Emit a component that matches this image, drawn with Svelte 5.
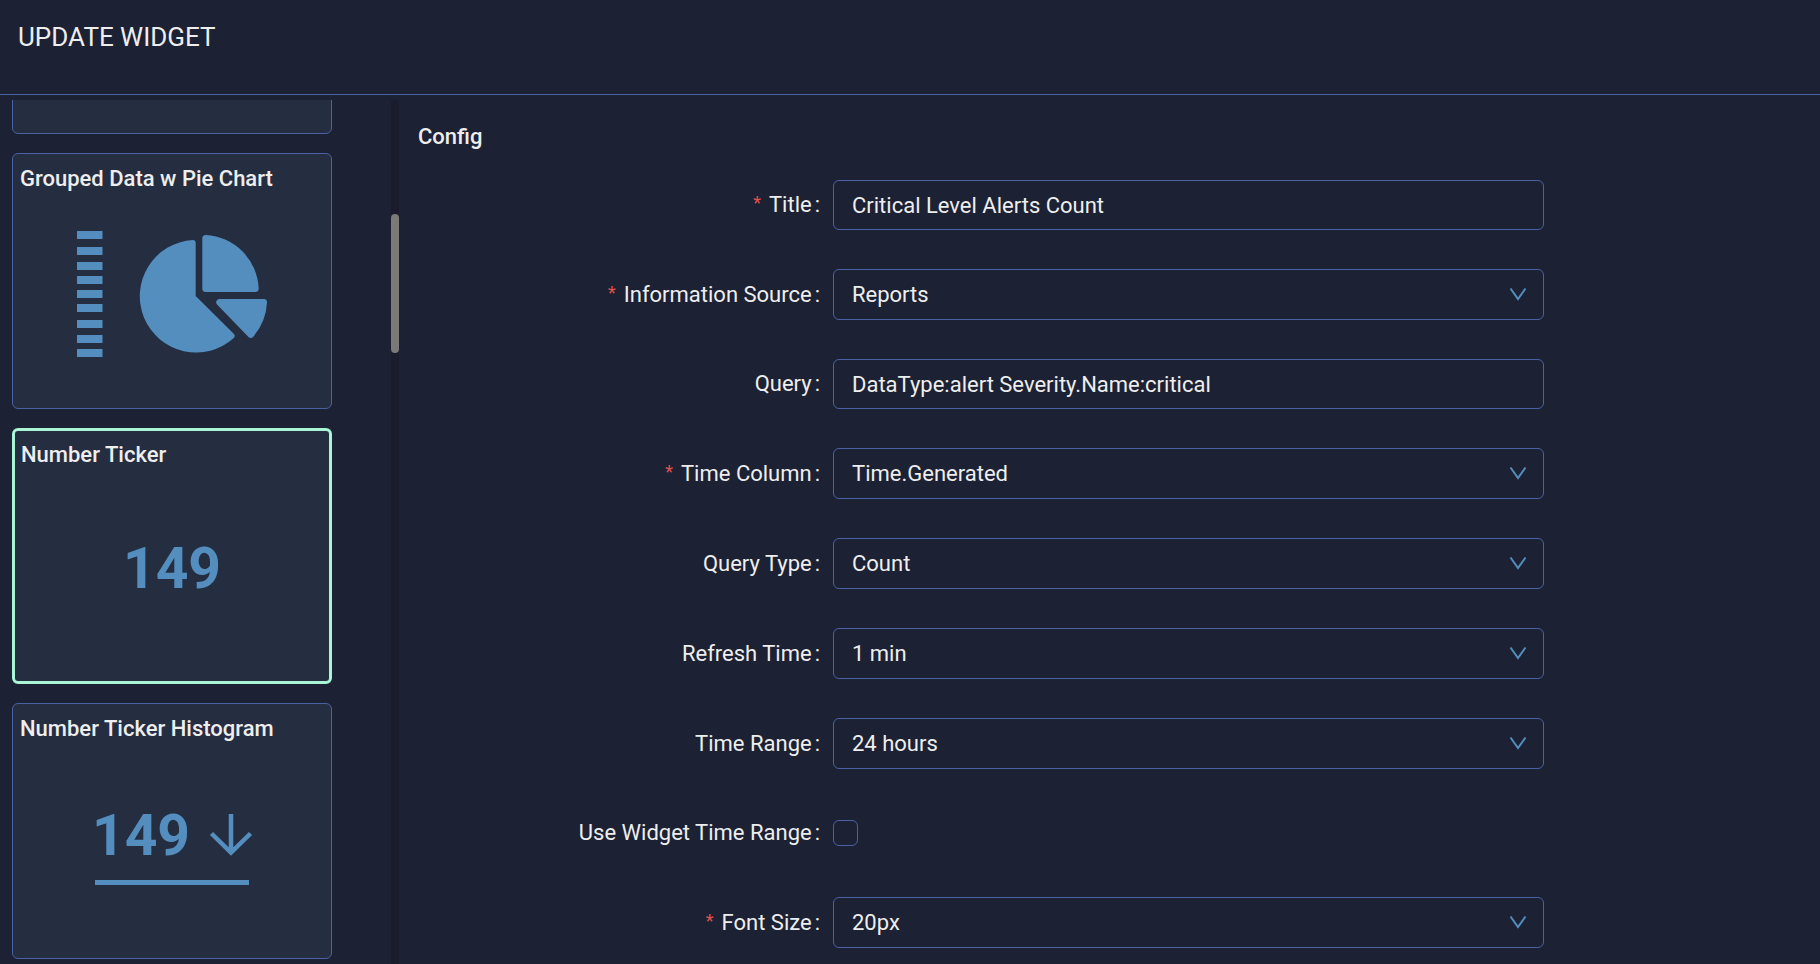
<script>

    // the first card has scrolled up, only its empty lower edge shows
    const widgets = [
        { name: '', kind: 'bar' },
        { name: 'Grouped Data w Pie Chart', kind: 'pie' },
        { name: 'Number Ticker', kind: 'ticker' },
        { name: 'Number Ticker Histogram', kind: 'histogram' }
    ]

    const bars = [ 0, 16, 31, 45, 59, 73, 89, 104, 118 ]

    const fields = [
        { id: 'title', label: 'Title', type: 'text', required: true, value: 'Critical Level Alerts Count' },
        { id: 'source', label: 'Information Source', type: 'select', required: true, options: ['Reports'] },
        { id: 'query', label: 'Query', type: 'text', value: 'DataType:alert Severity.Name:critical' },
        { id: 'timeColumn', label: 'Time Column', type: 'select', required: true, options: ['Time.Generated'] },
        { id: 'queryType', label: 'Query Type', type: 'select', options: ['Count'] },
        { id: 'refresh', label: 'Refresh Time', type: 'select', options: ['1 min'] },
        { id: 'range', label: 'Time Range', type: 'select', options: ['24 hours'] },
        { id: 'useWidgetRange', label: 'Use Widget Time Range', type: 'checkbox' },
        { id: 'fontSize', label: 'Font Size', type: 'select', required: true, options: ['20px'] }
    ]

    let selected = $state('ticker')

</script>

<div class="page">
    <header>
        <h1>UPDATE WIDGET</h1>
    </header>

    <div class="body">
        <aside>
            <div class="list">
                {#each widgets as widget}
                    <button
                        type="button"
                        class="card"
                        class:selected={selected === widget.kind}
                        onclick={() => selected = widget.kind}
                    >
                        <span class="name">{widget.name}</span>
                        <span class="preview">
                            {#if widget.kind === 'pie'}
                                <svg class="bars" width="26" height="126" viewBox="0 0 26 126">
                                    {#each bars as y}
                                        <rect x="0" {y} width="25.5" height="8" />
                                    {/each}
                                </svg>
                                <svg width="128" height="118" viewBox="0 0 128 118">
                                    <path d="M53.700 5a3 3 0 0 1 3 3V61L94.500 98.500a3.200 3.200 0 0 1 .3 4.500A56.300 56.300 0 1 1 53.700 5z" />
                                    <path d="M66.800 0A56 56 0 0 1 119.700 53.500a3.500 3.500 0 0 1-3.500 3.500H66.800a3.500 3.500 0 0 1-3.500-3.500V3.500A3.500 3.500 0 0 1 66.800 0z" />
                                    <path d="M80 64h45a3 3 0 0 1 3 3.500A57 57 0 0 1 114 102a3 3 0 0 1-4.500 0L78 69.500A3.300 3.300 0 0 1 80 64z" />
                                </svg>
                            {:else if widget.kind === 'ticker'}
                                <span class="number">149</span>
                            {:else if widget.kind === 'histogram'}
                                <span class="trend">
                                    <span class="value">
                                        <span class="number">149</span>
                                        <svg class="stroked" width="42" height="42" viewBox="0 0 42 42">
                                            <path d="M21 0v38M1.500 19.500L21 38.500L40.500 19.500" />
                                        </svg>
                                    </span>
                                    <span class="line"></span>
                                </span>
                            {/if}
                        </span>
                    </button>
                {/each}
            </div>
            <div class="track"><div class="thumb"></div></div>
        </aside>

        <main>
            <h2>Config</h2>
            <form>
                {#each fields as field}
                    <div class="row">
                        <label for={field.id}>
                            {#if field.required}<span class="star">*</span>{/if}
                            <span>{field.label}</span>
                            <span class="colon">:</span>
                        </label>
                        {#if field.type === 'select'}
                            <div class="select">
                                <select id={field.id}>
                                    {#each field.options as option}
                                        <option>{option}</option>
                                    {/each}
                                </select>
                                <svg class="arrow" width="16" height="13" viewBox="0 0 16 13">
                                    <path d="M0.500 0.500L8 11L15.500 0.500" />
                                </svg>
                            </div>
                        {:else if field.type === 'checkbox'}
                            <div class="check"><input id={field.id} type="checkbox" /></div>
                        {:else}
                            <input id={field.id} type="text" value={field.value} />
                        {/if}
                    </div>
                {/each}
            </form>
        </main>
    </div>
</div>

<style>

    :global(body) {
        background: #1c2133;
    }

    .page {
        display: flex;
        flex-direction: column;
        height: 100vh;
        overflow: hidden;
        font-family: Roboto, 'Liberation Sans', sans-serif;
        font-size: 22px;
        line-height: 34px;
        color: #eee;
        background: #1c2133;
    }

    header {
        flex: none;
        padding: 20px 18px 40px;
        border-bottom: 1px solid #4a62a3;
    }

    h1, h2 {
        margin: 0;
        font-size: inherit;
    }

    h1 {
        font-size: 26px;
        font-weight: 400;
    }

    .body {
        display: flex;
        flex: 1;
        min-height: 0;
    }

    aside {
        display: flex;
        flex: none;
        justify-content: space-between;
        width: 387px;
        margin-top: 5px;
        padding-left: 12px;
    }

    /* the list is scrolled down, so it hangs from the bottom edge */
    .list {
        display: flex;
        flex-direction: column;
        justify-content: flex-end;
        gap: 19px;
        width: 320px;
        padding-bottom: 5px;
        overflow: hidden;
    }

    .card {
        display: flex;
        flex: none;
        flex-direction: column;
        height: 256px;
        padding: 8px 7px;
        font: inherit;
        color: inherit;
        text-align: left;
        background: #252d41;
        border: 1px solid #4a62a3;
        border-radius: 6px;
        box-sizing: border-box;
        cursor: pointer;
    }

    .card.selected {
        padding: 7px 6px;
        border: 3px solid #a9f5d5;
    }

    .name {
        font-weight: 500;
    }

    .preview {
        display: flex;
        flex: 1;
        align-items: center;
        justify-content: center;
        padding-bottom: 9px;
        color: #538ebe;
    }

    svg {
        fill: #538ebe;
        overflow: visible;
    }

    .bars {
        margin-right: 36px;
    }

    .number {
        font-size: 57px;
        font-weight: 700;
        line-height: 57px;
    }

    .trend {
        display: flex;
        flex-direction: column;
        align-items: center;
        gap: 16px;
        padding-top: 4px;
    }

    .value {
        display: flex;
        align-items: center;
        gap: 20px;
    }

    .line {
        width: 154px;
        height: 5px;
        background: #538ebe;
    }

    .stroked {
        fill: none;
        stroke: #538ebe;
        stroke-width: 4.500;
    }

    .track {
        width: 8px;
        background: #1a1c2d;
        border-radius: 4px 4px 0 0;
    }

    .thumb {
        height: 139px;
        margin-top: 114px;
        background: #7c7a78;
        border-radius: 4px;
    }

    main {
        flex: 1;
        padding: 25px 0 0 19px;
    }

    h2 {
        font-weight: 500;
    }

    form {
        display: flex;
        flex-direction: column;
        gap: 39px;
        margin-top: 26px;
    }

    .row {
        display: grid;
        grid-template-columns: 415fr 711fr 276fr;
        align-items: center;
    }

    label {
        display: flex;
        justify-content: flex-end;
        padding-right: 13px;
        white-space: nowrap;
    }

    .star {
        margin-right: 8px;
        font-size: 18px;
        line-height: 30px;
        color: #e0524d;
    }

    .colon {
        margin-left: 3px;
    }

    input[type='text'], select {
        width: 100%;
        height: 50px;
        padding: 0 18px;
        font: inherit;
        color: inherit;
        background: transparent;
        border: 1px solid #4a62a3;
        border-radius: 6px;
        box-sizing: border-box;
        outline: none;
    }

    .select {
        display: grid;
        align-items: center;
    }

    select {
        grid-area: 1 / 1;
        height: 51px;
        appearance: none;
    }

    .arrow {
        grid-area: 1 / 1;
        justify-self: end;
        margin-right: 18px;
        fill: none;
        stroke: #538ebe;
        stroke-width: 2;
        pointer-events: none;
    }

    .check {
        display: flex;
        align-items: center;
        height: 50px;
    }

    input[type='checkbox'] {
        width: 25px;
        height: 26px;
        margin: 0;
        appearance: none;
        border: 1px solid #4a62a3;
        border-radius: 6px;
    }

    input[type='checkbox']:checked {
        background: #538ebe;
    }

</style>
